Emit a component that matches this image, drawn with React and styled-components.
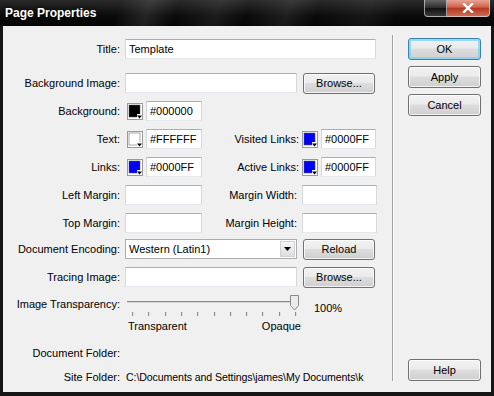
import React from 'react';
import styled, { createGlobalStyle } from 'styled-components';

const GlobalStyle = createGlobalStyle`
	html, body {
		margin: 0;
		padding: 0;
		background: #000;
	}
	body {
		font-family: 'Liberation Sans', Arial, sans-serif;
		font-size: 11px;
		color: #000;
	}
`;

const ticks = Array.from({ length: 11 }, (_, i) => Math.round(7 + i * 16.3));

function Swatch({ color }) {
	return (
		<SwatchBox width='16' height='17' viewBox='0 0 16 17'>
			<rect x='0.5' y='0.5' width='15' height='16' fill='#fff' stroke='#9a9a9a' />
			<rect x='2' y='2' width='11' height='12' fill={color} stroke='#555' strokeWidth='0.5' />
			<rect x='10' y='11' width='5' height='5' fill='#fff' />
			<path d='M10 12.5 h5 l-2.5 3 z' fill='#000' />
		</SwatchBox>
	);
}

function Slider() {
	return (
		<SliderArt width='176' height='24' viewBox='0 0 176 24'>
			<rect x='2' y='7' width='168' height='1' fill='#8a8a8a' />
			<rect x='2' y='8' width='168' height='1' fill='#d6d6d6' />
			{ticks.map((x) => (
				<g key={x}>
					<rect x={x} y='18' width='1' height='4' fill='#8c8c8c' />
					<rect x={x + 1} y='18' width='1' height='4' fill='#e0e0e0' />
				</g>
			))}
			<path d='M165.5 1.5 h8 v10 l-4 4.5 l-4 -4.5 z' fill='#ececec' stroke='#8a8a8a' />
		</SliderArt>
	);
}

function ColorField({ color, value, width = 56 }) {
	return (
		<>
			<Swatch color={color} />
			<TextBox $w={width} defaultValue={value} readOnly />
		</>
	);
}

export default function App() {
	return (
		<>
			<GlobalStyle />
			<Window>
				<TitleBar>
					<Caption>Page Properties</Caption>
					<CaptionButtons>
						<MinBtn />
						<CloseBtn>
							<svg width='12' height='10' viewBox='0 0 12 10'>
								<path d='M2 1 L10 9 M10 1 L2 9' stroke='#fff' strokeWidth='2.4' strokeLinecap='square' />
							</svg>
						</CloseBtn>
					</CaptionButtons>
				</TitleBar>

				<Body>
					<Form>
						<Row $mt={13}>
							<Label>Title:</Label>
							<TextBox $w={251} defaultValue='Template' readOnly />
						</Row>

						<Row $mt={14}>
							<Label>Background Image:</Label>
							<TextBox $w={172} readOnly />
							<Button $w={72} $h={21} $ml={6}>
								Browse...
							</Button>
						</Row>

						<Row $mt={8}>
							<Label>Background:</Label>
							<ColorField color='#000000' value='#000000' />
						</Row>

						<Row $mt={8}>
							<Label>Text:</Label>
							<ColorField color='#ffffff' value='#FFFFFF' />
							<SubLabel>Visited Links:</SubLabel>
							<ColorField color='#0000ff' value='#0000FF' width={55} />
						</Row>

						<Row $mt={8}>
							<Label>Links:</Label>
							<ColorField color='#0000ff' value='#0000FF' />
							<SubLabel>Active Links:</SubLabel>
							<ColorField color='#0000ff' value='#0000FF' width={55} />
						</Row>

						<Row $mt={8}>
							<Label>Left Margin:</Label>
							<TextBox $w={77} readOnly />
							<MarginLabel>Margin Width:</MarginLabel>
							<TextBox $w={75} readOnly />
						</Row>

						<Row $mt={8}>
							<Label>Top Margin:</Label>
							<TextBox $w={77} readOnly />
							<MarginLabel>Margin Height:</MarginLabel>
							<TextBox $w={75} readOnly />
						</Row>

						<Row $mt={6}>
							<Label>Document Encoding:</Label>
							<Select>
								<SelectValue>Western (Latin1)</SelectValue>
								<DropBtn>
									<svg width='7' height='4' viewBox='0 0 7 4'>
										<path d='M0 0 h7 l-3.5 4 z' fill='#000' />
									</svg>
								</DropBtn>
							</Select>
							<Button $w={72} $h={21} $ml={6}>
								Reload
							</Button>
						</Row>

						<Row $mt={8}>
							<Label>Tracing Image:</Label>
							<TextBox $w={172} readOnly />
							<Button $w={72} $h={21} $ml={6}>
								Browse...
							</Button>
						</Row>

						<SliderRow>
							<Label $lh={20}>Image Transparency:</Label>
							<SliderColumn>
								<Slider />
								<ScaleLabels>
									<span>Transparent</span>
									<span>Opaque</span>
								</ScaleLabels>
							</SliderColumn>
							<Percent>100%</Percent>
						</SliderRow>

						<InfoRow $mt={13}>
							<Label>Document Folder:</Label>
						</InfoRow>

						<InfoRow $mt={10}>
							<Label>Site Folder:</Label>
							<PathText>C:\Documents and Settings\james\My Documents\k</PathText>
						</InfoRow>
					</Form>

					<Divider />

					<Actions>
						<Button $default>OK</Button>
						<Button>Apply</Button>
						<Button>Cancel</Button>
						<HelpButton>Help</HelpButton>
					</Actions>
				</Body>
			</Window>
		</>
	);
}

const Window = styled.div`
	width: 494px;
	height: 396px;
	background: #161616;
	display: flex;
	flex-direction: column;
	box-sizing: border-box;
	overflow: hidden;
`;

const TitleBar = styled.div`
	height: 26px;
	flex: none;
	display: flex;
	align-items: flex-start;
	background: linear-gradient(
			108deg,
			rgba(255, 255, 255, 0) 0%,
			rgba(255, 255, 255, 0) 24%,
			rgba(255, 255, 255, 0.1) 30%,
			rgba(255, 255, 255, 0) 36%,
			rgba(255, 255, 255, 0.07) 44%,
			rgba(255, 255, 255, 0) 50%,
			rgba(255, 255, 255, 0.08) 58%,
			rgba(255, 255, 255, 0) 64%,
			rgba(255, 255, 255, 0.05) 74%,
			rgba(255, 255, 255, 0) 80%
		),
		linear-gradient(#2a2a2a, #0b0b0b 60%, #050505);
`;

const Caption = styled.div`
	color: #fff;
	font-weight: bold;
	font-size: 12px;
	line-height: 26px;
	padding-left: 5px;
	text-shadow: 0 0 4px rgba(0, 0, 0, 0.8);
`;

const CaptionButtons = styled.div`
	margin-left: auto;
	margin-right: 4px;
	display: flex;
`;

const MinBtn = styled.div`
	width: 23px;
	height: 17px;
	box-sizing: border-box;
	border: 1px solid rgba(210, 210, 210, 0.7);
	border-top: none;
	border-radius: 0 0 0 4px;
	background: linear-gradient(#666 0%, #2a2a2a 50%, #111 52%, #3a3a3a 100%);
`;

const CloseBtn = styled.div`
	width: 43px;
	height: 17px;
	box-sizing: border-box;
	border: 1px solid rgba(210, 210, 210, 0.7);
	border-top: none;
	border-left: none;
	border-radius: 0 0 4px 0;
	background: linear-gradient(#e9a495 0%, #d0604a 45%, #b43a22 52%, #cf6a50 100%);
	display: flex;
	align-items: center;
	justify-content: center;
`;

const Body = styled.div`
	flex: 1;
	min-height: 0;
	overflow: hidden;
	margin: 0 3px 4px;
	background: #f0f0f0;
	display: flex;
`;

const Form = styled.div`
	width: 389px;
	flex: none;
	display: flex;
	flex-direction: column;
	box-sizing: border-box;
`;

const Row = styled.div`
	display: flex;
	align-items: center;
	height: 20px;
	flex: none;
	margin-top: ${(p) => p.$mt || 0}px;
`;

const Label = styled.div`
	width: 117px;
	flex: none;
	margin-right: 5px;
	text-align: right;
	white-space: nowrap;
	line-height: ${(p) => p.$lh || 14}px;
`;

const SubLabel = styled.div`
	width: 97px;
	flex: none;
	margin-right: 1px;
	text-align: right;
	white-space: nowrap;
`;

const MarginLabel = styled.div`
	width: 95px;
	flex: none;
	margin-right: 5px;
	text-align: right;
	white-space: nowrap;
`;

const TextBox = styled.input`
	width: ${(p) => p.$w}px;
	height: 20px;
	flex: none;
	box-sizing: border-box;
	border: 1px solid #abadb3;
	border-color: #abadb3 #d5d9de #e3e9ef #d5d9de;
	background: #fff;
	padding: 0 3px;
	margin: 0;
	font: 11px 'Liberation Sans', Arial, sans-serif;
	color: #000;
	outline: none;
`;

const SwatchBox = styled.svg`
	flex: none;
	margin: 0 3px 0 2px;
	display: block;
`;

const Select = styled.div`
	width: 172px;
	height: 20px;
	flex: none;
	box-sizing: border-box;
	border: 1px solid #abadb3;
	background: #fff;
	display: flex;
	align-items: center;
`;

const SelectValue = styled.div`
	flex: 1;
	padding-left: 3px;
	white-space: nowrap;
`;

const DropBtn = styled.div`
	width: 15px;
	height: 16px;
	margin-right: 1px;
	box-sizing: border-box;
	border: 1px solid #d0d0d0;
	background: linear-gradient(#f6f6f6, #dedede);
	display: flex;
	align-items: center;
	justify-content: center;
`;

const Button = styled.button`
	width: ${(p) => p.$w || 73}px;
	height: ${(p) => p.$h || 22}px;
	flex: none;
	box-sizing: border-box;
	margin: 0 0 0 ${(p) => p.$ml || 0}px;
	padding: 0;
	border: 1px solid ${(p) => (p.$default ? '#3c7fb1' : '#707070')};
	border-radius: 3px;
	background: linear-gradient(#f2f2f2 0%, #ebebeb 45%, #dddddd 50%, #cfcfcf 100%);
	box-shadow: inset 0 0 0 ${(p) => (p.$default ? '2px rgba(120, 210, 245, 0.75)' : '1px rgba(255, 255, 255, 0.75)')};
	font: 11px 'Liberation Sans', Arial, sans-serif;
	color: #000;
`;

const HelpButton = styled(Button)`
	margin-top: auto;
`;

const SliderRow = styled.div`
	display: flex;
	align-items: flex-start;
	margin-top: 7px;
	flex: none;
`;

const SliderColumn = styled.div`
	width: 176px;
	flex: none;
	display: flex;
	flex-direction: column;
`;

const SliderArt = styled.svg`
	display: block;
`;

const ScaleLabels = styled.div`
	display: flex;
	justify-content: space-between;
	padding: 1px 0 0 3px;
	line-height: 14px;
`;

const Percent = styled.div`
	margin-left: 13px;
	padding-top: 7px;
	line-height: 14px;
`;

const InfoRow = styled.div`
	display: flex;
	align-items: center;
	height: 14px;
	flex: none;
	margin-top: ${(p) => p.$mt || 0}px;
`;

const PathText = styled.div`
	white-space: nowrap;
	line-height: 14px;
	margin-left: 1px;
	font-size: 10.6px;
	letter-spacing: -0.1px;
`;

const Divider = styled.div`
	width: 1px;
	flex: none;
	background: #a0a0a0;
	box-shadow: 1px 0 0 #fff;
	margin: 9px 0 11px;
`;

const Actions = styled.div`
	flex: 1;
	display: flex;
	flex-direction: column;
	gap: 6px;
	padding: 12px 0 11px 15px;
`;
